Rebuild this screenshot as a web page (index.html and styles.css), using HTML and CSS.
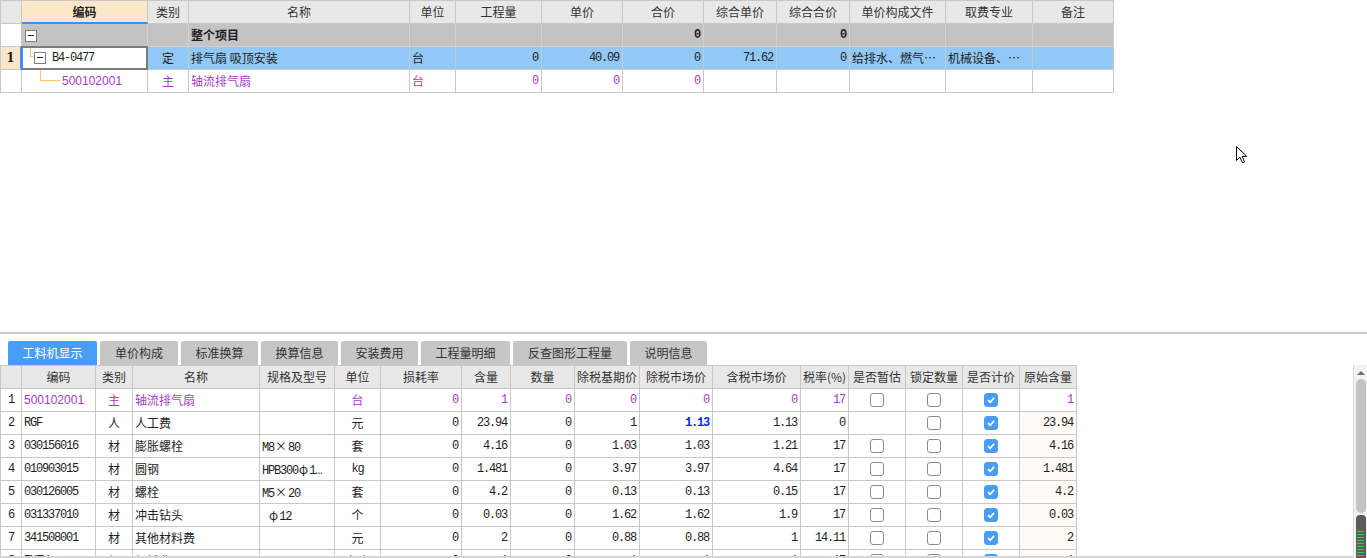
FILE: index.html
```html
<!DOCTYPE html>
<html lang="zh-CN">
<head>
<meta charset="utf-8">
<title>工料机</title>
<link rel="stylesheet" href="styles.css">
</head>
<body>
<div class="top-pane">
  <div class="grid top-grid">
    <div class="hd"></div>
    <div class="hd hd-active">编码</div>
    <div class="hd">类别</div>
    <div class="hd">名称</div>
    <div class="hd">单位</div>
    <div class="hd">工程量</div>
    <div class="hd">单价</div>
    <div class="hd">合价</div>
    <div class="hd">综合单价</div>
    <div class="hd">综合合价</div>
    <div class="hd">单价构成文件</div>
    <div class="hd">取费专业</div>
    <div class="hd">备注</div>

    <div class="rn"></div>
    <div class="g tree tree-root"><span class="tbox"></span></div>
    <div class="g"></div>
    <div class="g b">整个项目</div>
    <div class="g"></div>
    <div class="g"></div>
    <div class="g"></div>
    <div class="g r m b">0</div>
    <div class="g"></div>
    <div class="g r m b">0</div>
    <div class="g"></div>
    <div class="g"></div>
    <div class="g"></div>

    <div class="rn rn-sel">1</div>
    <div class="focus tree tree-l1"><span class="tbox"></span><span class="m code">B4-0477</span></div>
    <div class="s c">定</div>
    <div class="s">排气扇 吸顶安装</div>
    <div class="s">台</div>
    <div class="s r m">0</div>
    <div class="s r m">40.09</div>
    <div class="s r m">0</div>
    <div class="s r m">71.62</div>
    <div class="s r m">0</div>
    <div class="s">给排水、燃气…</div>
    <div class="s">机械设备、…</div>
    <div class="s"></div>

    <div class="rn"></div>
    <div class="p tree tree-l2"><span class="code2">500102001</span></div>
    <div class="p c">主</div>
    <div class="p">轴流排气扇</div>
    <div class="p">台</div>
    <div class="p r m">0</div>
    <div class="p r m">0</div>
    <div class="p r m">0</div>
    <div></div>
    <div></div>
    <div></div>
    <div></div>
    <div></div>
  </div>
</div>

<div class="splitter"></div>

<div class="tabs">
  <div class="tab active w90">工料机显示</div>
  <div class="tab w78">单价构成</div>
  <div class="tab w77">标准换算</div>
  <div class="tab w77">换算信息</div>
  <div class="tab w77">安装费用</div>
  <div class="tab w89">工程量明细</div>
  <div class="tab w114">反查图形工程量</div>
  <div class="tab w77">说明信息</div>
</div>

<div class="bottom-pane">
  <div class="bottom-view">
    <div class="grid bot-grid">
      <div class="hd"></div>
      <div class="hd">编码</div>
      <div class="hd">类别</div>
      <div class="hd">名称</div>
      <div class="hd">规格及型号</div>
      <div class="hd">单位</div>
      <div class="hd">损耗率</div>
      <div class="hd">含量</div>
      <div class="hd">数量</div>
      <div class="hd">除税基期价</div>
      <div class="hd">除税市场价</div>
      <div class="hd">含税市场价</div>
      <div class="hd">税率(%)</div>
      <div class="hd">是否暂估</div>
      <div class="hd">锁定数量</div>
      <div class="hd">是否计价</div>
      <div class="hd">原始含量</div>

      <div class="c m">1</div>
      <div class="p code2">500102001</div>
      <div class="p c">主</div>
      <div class="p">轴流排气扇</div>
      <div></div>
      <div class="p c">台</div>
      <div class="p r m">0</div>
      <div class="p r m">1</div>
      <div class="p r m">0</div>
      <div class="p r m">0</div>
      <div class="p r m">0</div>
      <div class="p r m">0</div>
      <div class="p r m">17</div>
      <div class="ck"><span class="cb"></span></div>
      <div class="ck"><span class="cb"></span></div>
      <div class="ck"><span class="cb on"><svg viewBox="0 0 14 14"><path d="M3.5 7.2 L6 9.6 L10.6 4.6"/></svg></span></div>
      <div class="p r m">1</div>

      <div class="c m">2</div>
      <div class="m">RGF</div>
      <div class="c">人</div>
      <div>人工费</div>
      <div></div>
      <div class="c">元</div>
      <div class="r m">0</div>
      <div class="r m">23.94</div>
      <div class="r m">0</div>
      <div class="r m">1</div>
      <div class="r m blue">1.13</div>
      <div class="r m">1.13</div>
      <div class="r m">0</div>
      <div></div>
      <div class="ck"><span class="cb"></span></div>
      <div class="ck"><span class="cb on"><svg viewBox="0 0 14 14"><path d="M3.5 7.2 L6 9.6 L10.6 4.6"/></svg></span></div>
      <div class="r m orig">23.94</div>

      <div class="c m">3</div>
      <div class="m">030156016</div>
      <div class="c">材</div>
      <div>膨胀螺栓</div>
      <div class="m spec">M8<span class="x">×</span>80</div>
      <div class="c">套</div>
      <div class="r m">0</div>
      <div class="r m">4.16</div>
      <div class="r m">0</div>
      <div class="r m">1.03</div>
      <div class="r m">1.03</div>
      <div class="r m">1.21</div>
      <div class="r m">17</div>
      <div class="ck"><span class="cb"></span></div>
      <div class="ck"><span class="cb"></span></div>
      <div class="ck"><span class="cb on"><svg viewBox="0 0 14 14"><path d="M3.5 7.2 L6 9.6 L10.6 4.6"/></svg></span></div>
      <div class="r m orig">4.16</div>

      <div class="c m">4</div>
      <div class="m">010903015</div>
      <div class="c">材</div>
      <div>圆钢</div>
      <div class="m spec">HPB300<span class="x">φ</span>1…</div>
      <div class="c m">kg</div>
      <div class="r m">0</div>
      <div class="r m">1.481</div>
      <div class="r m">0</div>
      <div class="r m">3.97</div>
      <div class="r m">3.97</div>
      <div class="r m">4.64</div>
      <div class="r m">17</div>
      <div class="ck"><span class="cb"></span></div>
      <div class="ck"><span class="cb"></span></div>
      <div class="ck"><span class="cb on"><svg viewBox="0 0 14 14"><path d="M3.5 7.2 L6 9.6 L10.6 4.6"/></svg></span></div>
      <div class="r m orig">1.481</div>

      <div class="c m">5</div>
      <div class="m">030126005</div>
      <div class="c">材</div>
      <div>螺栓</div>
      <div class="m spec">M5<span class="x">×</span>20</div>
      <div class="c">套</div>
      <div class="r m">0</div>
      <div class="r m">4.2</div>
      <div class="r m">0</div>
      <div class="r m">0.13</div>
      <div class="r m">0.13</div>
      <div class="r m">0.15</div>
      <div class="r m">17</div>
      <div class="ck"><span class="cb"></span></div>
      <div class="ck"><span class="cb"></span></div>
      <div class="ck"><span class="cb on"><svg viewBox="0 0 14 14"><path d="M3.5 7.2 L6 9.6 L10.6 4.6"/></svg></span></div>
      <div class="r m orig">4.2</div>

      <div class="c m">6</div>
      <div class="m">031337010</div>
      <div class="c">材</div>
      <div>冲击钻头</div>
      <div class="m spec">&nbsp;<span class="x">φ</span>12</div>
      <div class="c">个</div>
      <div class="r m">0</div>
      <div class="r m">0.03</div>
      <div class="r m">0</div>
      <div class="r m">1.62</div>
      <div class="r m">1.62</div>
      <div class="r m">1.9</div>
      <div class="r m">17</div>
      <div class="ck"><span class="cb"></span></div>
      <div class="ck"><span class="cb"></span></div>
      <div class="ck"><span class="cb on"><svg viewBox="0 0 14 14"><path d="M3.5 7.2 L6 9.6 L10.6 4.6"/></svg></span></div>
      <div class="r m orig">0.03</div>

      <div class="c m">7</div>
      <div class="m">341508001</div>
      <div class="c">材</div>
      <div>其他材料费</div>
      <div></div>
      <div class="c">元</div>
      <div class="r m">0</div>
      <div class="r m">2</div>
      <div class="r m">0</div>
      <div class="r m">0.88</div>
      <div class="r m">0.88</div>
      <div class="r m">1</div>
      <div class="r m">14.11</div>
      <div class="ck"><span class="cb"></span></div>
      <div class="ck"><span class="cb"></span></div>
      <div class="ck"><span class="cb on"><svg viewBox="0 0 14 14"><path d="M3.5 7.2 L6 9.6 L10.6 4.6"/></svg></span></div>
      <div class="r m orig">2</div>

      <div class="c m">8</div>
      <div class="m">ZHFY</div>
      <div class="c">机</div>
      <div>机械费</div>
      <div></div>
      <div class="c">台班</div>
      <div class="r m">0</div>
      <div class="r m">1</div>
      <div class="r m">0</div>
      <div class="r m">1</div>
      <div class="r m">1</div>
      <div class="r m">1</div>
      <div class="r m">17</div>
      <div class="ck"><span class="cb"></span></div>
      <div class="ck"><span class="cb"></span></div>
      <div class="ck"><span class="cb on"><svg viewBox="0 0 14 14"><path d="M3.5 7.2 L6 9.6 L10.6 4.6"/></svg></span></div>
      <div class="r m orig">1</div>
    </div>
  </div>
  <div class="vscroll">
    <div class="arrow-up"></div>
    <div class="thumb"></div>
    <div class="dock">
      <div class="bars"></div>
    </div>
  </div>
</div>

<svg class="cursor" width="13" height="20" viewBox="0 0 13 20">
  <path d="M1.5 1.5 L1.5 15.5 L5 12.2 L7.4 17.8 L9.6 16.9 L7.2 11.4 L11.8 11.4 Z" fill="#fff" stroke="#000" stroke-width="1" stroke-linejoin="miter"/>
</svg>
</body>
</html>
```

FILE: styles.css
```css
html, body {
  margin: 0;
  padding: 0;
}

body {
  width: 1367px;
  height: 558px;
  overflow: hidden;
  background: #ffffff;
  font-family: "Noto Sans CJK SC", "Noto Sans", sans-serif;
  font-size: 12px;
  color: #1e1e1e;
  position: relative;
  display: flex;
  flex-direction: column;
}

/* ---------- grids ---------- */
.grid {
  display: grid;
  width: max-content;
  border-left: 1px solid #c8c8c8;
  border-top: 1px solid #c8c8c8;
}

.grid > div {
  box-sizing: border-box;
  height: 23px;
  line-height: 22px;
  padding: 0 2px;
  border-right: 1px solid #c8c8c8;
  border-bottom: 1px solid #c8c8c8;
  white-space: nowrap;
  overflow: hidden;
}

.top-grid {
  grid-template-columns: 21px 126px 41px 221px 46px 86px 81px 81px 73px 73px 96px 87px 81px;
}

.bot-grid {
  grid-template-columns: 21px 74px 37px 127px 75px 46px 81px 49px 64px 65px 73px 88px 48px 57px 57px 57px 57px;
}

.grid > .hd {
  background: #e8e8e8;
  color: #333;
  text-align: center;
}

.grid > .hd-active {
  background: #fde7c9;
  font-weight: bold;
  color: #222;
  border-bottom: 2px solid #3a8ff2;
  line-height: 21px;
}

.c { text-align: center; }
.r { text-align: right; }
.b { font-weight: bold; }

.m {
  font-family: "Liberation Mono", "DejaVu Sans Mono", monospace;
  font-size: 12px;
  letter-spacing: -1.2px;
}

.x {
  font-family: "Noto Sans CJK SC", sans-serif;
  letter-spacing: 0;
  padding: 0 1px;
}

.grid > .r.m { padding-right: 3px; }

.spec { padding-left: 1px; }

.blue {
  color: #0a28f0;
  font-weight: bold;
}

.p { color: #a43cc3; }

.code2 {
  font-family: "Liberation Sans", "Noto Sans", sans-serif;
  font-size: 12px;
  color: #a43cc3;
}

/* ---------- top pane ---------- */
.top-pane {
  height: 332px;
  flex: none;
}

.grid > .g {
  background: #c3c3c3;
  border-right-color: #d2d2d2;
  border-bottom-color: #d2d2d2;
}

.grid > .rn {
  background: #fff;
  text-align: center;
  padding: 0;
}

.grid > .rn-sel {
  background: #fde6c8;
  font-family: "DejaVu Serif", "Liberation Serif", serif;
  font-weight: bold;
  font-size: 12px;
  border-right: 2px solid #3a8ff2;
}

.grid > .s {
  background: #91c8f5;
}

.grid > .focus {
  background: #fff;
  overflow: visible;
  position: relative;
}

.focus::after {
  content: "";
  position: absolute;
  left: -1px;
  top: -1px;
  right: -1px;
  bottom: -1px;
  border: 2px solid #7b7b7b;
  border-left-color: #3a8ff2;
  pointer-events: none;
}

/* tree */
.tree {
  position: relative;
  display: flex;
  align-items: center;
}

.tbox {
  box-sizing: border-box;
  width: 12px;
  height: 12px;
  border: 1px solid #808080;
  background: #fff;
  position: relative;
  flex: none;
}

.tbox::after {
  content: "";
  position: absolute;
  left: 2px;
  right: 2px;
  top: 4px;
  height: 1px;
  background: #222;
}

.tree-root .tbox { margin-left: 1px; margin-top: 1px; }

.tree-root::after {
  content: "";
  position: absolute;
  left: 8px;
  top: 18px;
  height: 5px;
  width: 1px;
  background: #ffc273;
}

.tree-l1 .tbox { margin-left: 10px; margin-top: -1px; }

.tree-l1::before {
  content: "";
  position: absolute;
  left: 8px;
  top: 0;
  height: 9px;
  width: 4px;
  border-left: 1px solid #ffc273;
  border-bottom: 1px solid #ffc273;
}

.tree-l1 .code { margin-left: 6px; }

.tree-l2::before {
  content: "";
  position: absolute;
  left: 18px;
  top: -6px;
  height: 16px;
  width: 19px;
  border-left: 1px solid #ffc273;
  border-bottom: 1px solid #ffc273;
}

.tree-l2 .code2 { margin-left: 38px; }

/* ---------- splitter & tabs ---------- */
.splitter {
  flex: none;
  height: 2px;
  background: #c9c9c9;
}

.tabs {
  flex: none;
  display: flex;
  gap: 3px;
  padding-left: 8px;
  margin-top: 7px;
  height: 24px;
}

.tab {
  box-sizing: border-box;
  height: 24px;
  line-height: 24px;
  text-align: center;
  background: #c6c6c6;
  color: #333;
  border-radius: 2px 2px 0 0;
  font-size: 12px;
}

.tab.active {
  background: #4a9df6;
  color: #fff;
}

.w90 { width: 89px; }
.w89 { width: 89px; }
.w78 { width: 78px; }
.w77 { width: 77px; }
.w114 { width: 114px; }

/* ---------- bottom pane ---------- */
.bottom-pane {
  flex: 1;
  display: flex;
  min-height: 0;
}

.bottom-view {
  flex: 1;
  overflow: hidden;
  border-bottom: 2px solid #d6d6d6;
  height: 191px;
}

.grid > .ck {
  display: flex;
  align-items: center;
  justify-content: center;
  padding: 0;
}

.cb {
  box-sizing: border-box;
  width: 14px;
  height: 14px;
  border: 1px solid #8c8c8c;
  border-radius: 3px;
  background: #fff;
  display: block;
}

.cb.on {
  background: #4a9df6;
  border-color: #4a9df6;
}

.cb svg {
  display: block;
  width: 12px;
  height: 12px;
}

.cb path {
  fill: none;
  stroke: #fff;
  stroke-width: 2;
}

.grid > .orig {
  background: #fffaf4;
}

/* scrollbar */
.vscroll {
  flex: none;
  width: 13px;
  border-left: 1px solid #dadada;
  background: #f2f2f2;
  display: flex;
  flex-direction: column;
  align-items: center;
}

.arrow-up {
  flex: none;
  width: 0;
  height: 0;
  margin-top: 6px;
  border-left: 4px solid transparent;
  border-right: 4px solid transparent;
  border-bottom: 4px solid #6c6c6c;
}

.thumb {
  flex: none;
  width: 10px;
  height: 134px;
  margin-top: 4px;
  border-radius: 5px;
  background: #c3c3c3;
}

.dock {
  flex: 1;
  width: 10px;
  margin-top: 2px;
  border-radius: 4px 4px 0 0;
  background: #5c5c5c;
  display: flex;
  flex-direction: column;
  justify-content: flex-end;
  align-items: center;
}

.bars {
  width: 7px;
  height: 27px;
  background: repeating-linear-gradient(to bottom, #27d14a 0 1px, transparent 1px 3px);
}

.cursor {
  position: absolute;
  left: 1235px;
  top: 145px;
}
```
